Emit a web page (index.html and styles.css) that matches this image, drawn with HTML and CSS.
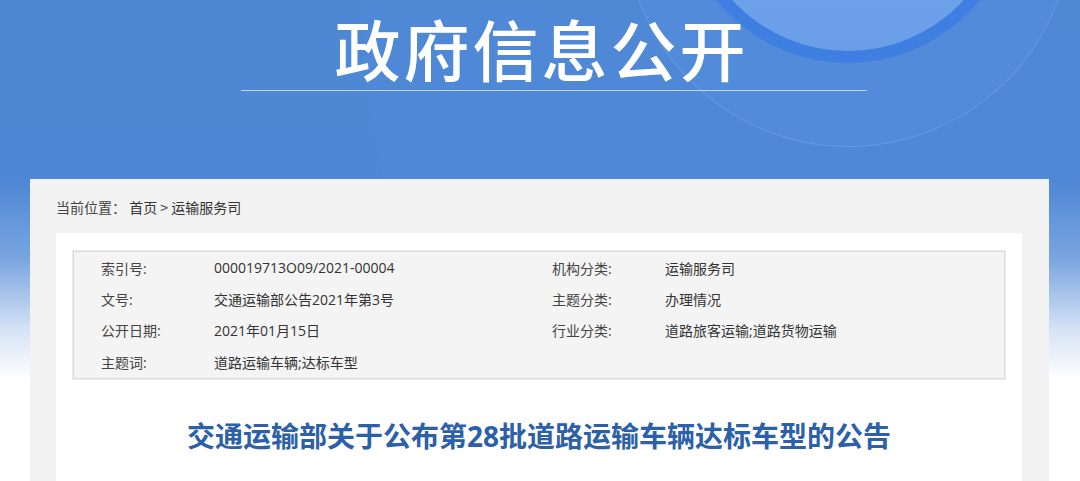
FILE: index.html
```html
<!DOCTYPE html>
<html lang="zh-CN">
<head>
<meta charset="utf-8">
<title>政府信息公开</title>
<link rel="stylesheet" href="styles.css">
</head>
<body>
<div class="page">
  <header class="banner">
    <div class="banner-bg">
      <div class="deco deco-arc"></div>
      <div class="deco deco-net"></div>
      <div class="deco deco-ring"></div>
      <div class="deco deco-core"></div>
    </div>
    <h1 class="banner-title">政府信息公开</h1>
    <div class="banner-line"></div>
  </header>
  <main class="card">
    <nav class="crumb"><span class="crumb-label">当前位置：</span> 首页 &gt; 运输服务司</nav>
    <section class="panel">
      <div class="meta">
        <div class="k">索引号:</div><div class="v">000019713O09/2021-00004</div>
        <div class="k">机构分类:</div><div class="v">运输服务司</div>
        <div class="k">文号:</div><div class="v">交通运输部公告2021年第3号</div>
        <div class="k">主题分类:</div><div class="v">办理情况</div>
        <div class="k">公开日期:</div><div class="v">2021年01月15日</div>
        <div class="k">行业分类:</div><div class="v">道路旅客运输;道路货物运输</div>
        <div class="k">主题词:</div><div class="v">道路运输车辆;达标车型</div>
        <div class="k"></div><div class="v"></div>
      </div>
      <h2 class="doc-title">交通运输部关于公布第28批道路运输车辆达标车型的公告</h2>
    </section>
  </main>
</div>
</body>
</html>
```

FILE: styles.css
```css
html, body {
  margin: 0;
  padding: 0;
}
body {
  width: 1080px;
  height: 481px;
  overflow: hidden;
  font-family: "Noto Sans CJK SC", "Noto Sans", sans-serif;
  background: linear-gradient(to bottom, #4e87d3 0, #4e87d5 180px, #7aa6e0 260px, #d6e3f5 330px, #ffffff 380px);
}
.page {
  position: relative;
}
.banner {
  position: relative;
  height: 179px;
  padding-top: 1px;
  box-sizing: border-box;
}
.banner-bg {
  position: absolute;
  left: 0;
  top: 0;
  width: 1080px;
  height: 179px;
  overflow: hidden;
}
.deco {
  position: absolute;
  border-radius: 50%;
}
.deco-arc {
  left: 360px;
  top: -700px;
  width: 1400px;
  height: 1400px;
  background: rgba(90, 150, 235, 0.1);
}
.deco-net {
  left: 625px;
  top: -300px;
  width: 445px;
  height: 445px;
  background: rgba(110, 165, 245, 0.12);
  border: 1px solid rgba(170, 205, 255, 0.2);
}
.deco-ring {
  left: 679px;
  top: -275px;
  width: 338px;
  height: 338px;
  background: #3f7fe2;
}
.deco-core {
  left: 691px;
  top: -263px;
  width: 314px;
  height: 314px;
  background: linear-gradient(to bottom, #78a9ea, #6a9fe8);
}
.banner-title {
  position: relative;
  margin: 0;
  text-align: center;
  color: #ffffff;
  font-size: 66px;
  font-weight: 500;
  line-height: 92px;
  letter-spacing: 3px;
  text-indent: 3px;
}
.banner-line {
  position: relative;
  margin: -3px 0 0 241px;
  width: 626px;
  height: 1px;
  background: rgba(255, 255, 255, 0.65);
}
.card {
  margin-left: 30px;
  width: 1019px;
  height: 302px;
  box-sizing: border-box;
  background: #f2f2f2;
  padding: 0 27px 0 26px;
}
.crumb {
  height: 54px;
  line-height: 56px;
  font-size: 14px;
  color: #333333;
}
.crumb-label {
  color: #444444;
}
.panel {
  background: #ffffff;
  height: 248px;
  padding: 18px 17px 0 17px;
  box-sizing: border-box;
}
.meta {
  display: grid;
  grid-template-columns: 113px 338px 113px 1fr;
  grid-auto-rows: 31.3px;
  align-items: center;
  padding: 0 0 1px 27px;
  background: #f4f4f4;
  border: 1px solid #dcdcdc;
  box-shadow: 0 0 0 1px #ececec;
  font-family: "Open Sans", "Noto Sans CJK SC", sans-serif;
  font-size: 14px;
  color: #333333;
}
.k {
  color: #444444;
}
.v {
  color: #333333;
}
.doc-title {
  margin: 37px 0 0 0;
  text-align: center;
  font-family: "Open Sans", "Noto Sans CJK SC", sans-serif;
  font-size: 28px;
  line-height: 40px;
  font-weight: 700;
  color: #2c60a8;
}
```
